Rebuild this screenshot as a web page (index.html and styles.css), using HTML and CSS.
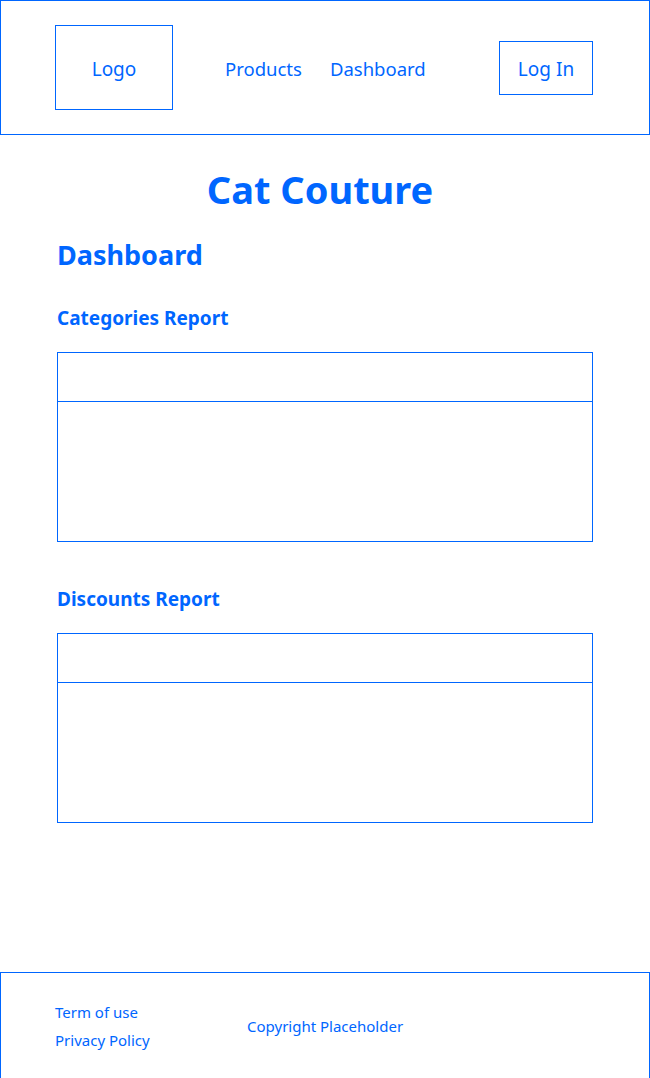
FILE: index.html
```html
<!DOCTYPE html>
<html lang="en">
<head>
<meta charset="utf-8">
<title>Cat Couture - Dashboard</title>
<link rel="stylesheet" href="styles.css">
</head>
<body>
<header class="site-header">
  <div class="logo">Logo</div>
  <nav class="nav">
    <a class="nav-link" href="#">Products</a>
    <a class="nav-link" href="#">Dashboard</a>
  </nav>
  <button class="login">Log In</button>
</header>
<main class="content">
  <h1 class="site-title">Cat Couture</h1>
  <h2 class="page-title">Dashboard</h2>
  <section class="report">
    <h3 class="report-title">Categories Report</h3>
    <div class="report-table">
      <div class="report-head"></div>
      <div class="report-body"></div>
    </div>
  </section>
  <section class="report">
    <h3 class="report-title">Discounts Report</h3>
    <div class="report-table">
      <div class="report-head"></div>
      <div class="report-body"></div>
    </div>
  </section>
</main>
<footer class="site-footer">
  <div class="footer-links">
    <a class="footer-link" href="#">Term of use</a>
    <a class="footer-link" href="#">Privacy Policy</a>
  </div>
  <div class="copyright">Copyright Placeholder</div>
</footer>
</body>
</html>
```

FILE: styles.css
```css
* { box-sizing: border-box; }
html, body { margin: 0; padding: 0; }
body {
  font-family: "Noto Sans", "Open Sans", sans-serif;
  color: #0066ff;
  background: #ffffff;
}
a { color: inherit; text-decoration: none; }

.site-header {
  border: 1px solid #0066ff;
  height: 135px;
  display: flex;
  align-items: center;
  padding: 0 56px 0 54px;
}
.logo {
  width: 118px;
  height: 85px;
  border: 1px solid #0066ff;
  display: flex;
  align-items: center;
  justify-content: center;
  font-size: 19px;
  padding-top: 2px;
}
.nav {
  display: flex;
  gap: 28px;
  margin-left: 52px;
  font-size: 18.5px;
  padding-top: 2px;
}
.login {
  margin-left: auto;
  width: 94px;
  height: 54px;
  border: 1px solid #0066ff;
  background: #fff;
  color: #0066ff;
  font-family: inherit;
  font-size: 19px;
  padding: 2px 0 0;
}

.content {
  padding: 0 57px;
  height: 837px;
}
.site-title {
  text-align: center;
  font-size: 38px;
  font-weight: 700;
  margin: 0;
  padding: 30px 10px 0 0;
  line-height: 48px;
}
.page-title {
  font-size: 27px;
  font-weight: 700;
  margin: 24px 0 0;
  line-height: 36px;
}
.report-title {
  font-size: 19px;
  font-weight: 700;
  margin: 0;
  line-height: 26px;
  padding-top: 32px;
}
.report + .report .report-title { padding-top: 44px; }
.report-table {
  margin-top: 21px;
  border: 1px solid #0066ff;
}
.report-head {
  height: 49px;
  border-bottom: 1px solid #0066ff;
}
.report-body {
  height: 139px;
}

.site-footer {
  border: 1px solid #0066ff;
  height: 108px;
  display: flex;
  align-items: center;
  padding: 0 54px;
  font-size: 15px;
}
.footer-links {
  display: flex;
  flex-direction: column;
  gap: 6px;
  width: 192px;
}
.footer-link { line-height: 22px; }
```
